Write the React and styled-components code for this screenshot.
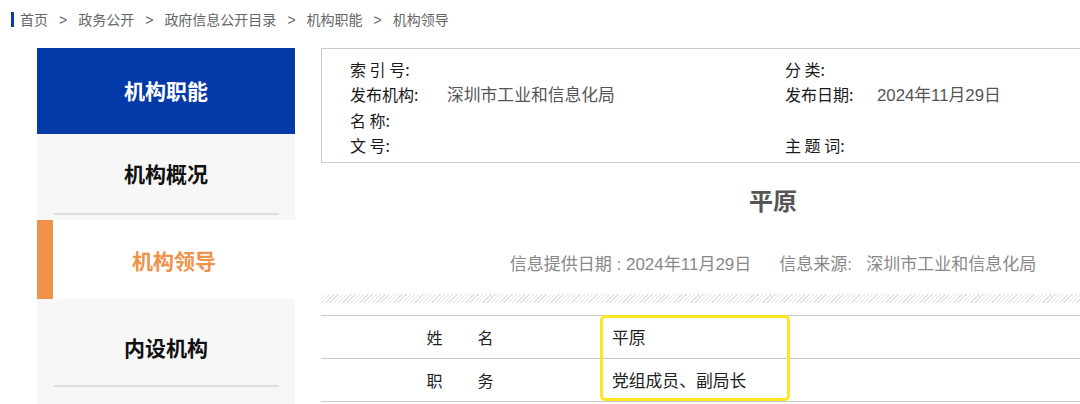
import styled, { createGlobalStyle } from "styled-components";

const GlobalStyle = createGlobalStyle`
  html, body {
    margin: 0;
    padding: 0;
    background: #fff;
    overflow: hidden;
  }
  body {
    font-family: "Liberation Sans", "Noto Sans CJK SC", sans-serif;
    color: #333;
  }
`;

const menu = [
  { id: "func", label: "机构职能", kind: "head" },
  { id: "summary", label: "机构概况", kind: "normal", top: 24, bottom: 25 },
  { id: "leader", label: "机构领导", kind: "active" },
  { id: "dept", label: "内设机构", kind: "normal", top: 33, bottom: 23 },
];

const crumbs = ["首页", "政务公开", "政府信息公开目录", "机构职能", "机构领导"];

const App = () => {
  return (
    <StyledPage>
      <GlobalStyle />
      <StyledBreadcrumb>
        <StyledCrumbMark />
        {crumbs.map((c, i) => (
          <span key={c}>
            {i > 0 && <StyledSep>&gt;</StyledSep>}
            {c}
          </span>
        ))}
      </StyledBreadcrumb>

      <StyledMain>
        <StyledSide>
          {menu.map((m) =>
            m.kind === "head" ? (
              <StyledHeadItem key={m.id}>{m.label}</StyledHeadItem>
            ) : m.kind === "active" ? (
              <StyledActiveItem key={m.id}>{m.label}</StyledActiveItem>
            ) : (
              <StyledMenuItem key={m.id} $top={m.top} $bottom={m.bottom}>
                <span>{m.label}</span>
                <StyledDivider />
              </StyledMenuItem>
            )
          )}
        </StyledSide>

        <StyledContent>
          <StyledMetaBox>
            <StyledMetaRow>
              <StyledMetaLabel $w={97}>索 引 号:</StyledMetaLabel>
            </StyledMetaRow>
            <StyledMetaRow>
              <StyledMetaLabel $w={92}>分 类:</StyledMetaLabel>
            </StyledMetaRow>
            <StyledMetaRow>
              <StyledMetaLabel $w={97}>发布机构:</StyledMetaLabel>
              <StyledMetaValue>深圳市工业和信息化局</StyledMetaValue>
            </StyledMetaRow>
            <StyledMetaRow>
              <StyledMetaLabel $w={92}>发布日期:</StyledMetaLabel>
              <StyledMetaValue>2024年11月29日</StyledMetaValue>
            </StyledMetaRow>
            <StyledMetaRow>
              <StyledMetaLabel $w={97}>名 称:</StyledMetaLabel>
            </StyledMetaRow>
            <StyledMetaRow />
            <StyledMetaRow>
              <StyledMetaLabel $w={97}>文 号:</StyledMetaLabel>
            </StyledMetaRow>
            <StyledMetaRow>
              <StyledMetaLabel $w={92}>主 题 词:</StyledMetaLabel>
            </StyledMetaRow>
          </StyledMetaBox>

          <StyledTitle>平原</StyledTitle>

          <StyledInfo>
            <span>信息提供日期 : 2024年11月29日</span>
            <span>信息来源:&nbsp;&nbsp;&nbsp;深圳市工业和信息化局</span>
          </StyledInfo>

          <StyledStripe />

          <StyledTableWrap>
            <StyledTable>
              <tbody>
                <tr>
                  <StyledLabelCell>姓　　名</StyledLabelCell>
                  <StyledValueCell>平原</StyledValueCell>
                  <StyledRestCell />
                </tr>
                <tr>
                  <StyledLabelCell>职　　务</StyledLabelCell>
                  <StyledValueCell>党组成员、副局长</StyledValueCell>
                  <StyledRestCell />
                </tr>
              </tbody>
            </StyledTable>
            <StyledHighlight />
          </StyledTableWrap>
        </StyledContent>
      </StyledMain>
    </StyledPage>
  );
};

export default App;

const StyledPage = styled.div`
  width: 1080px;
  height: 404px;
  overflow: hidden;
`;

const StyledBreadcrumb = styled.div`
  display: flex;
  align-items: center;
  height: 38px;
  padding-left: 11px;
  font-size: 14px;
  color: #666;
  box-sizing: border-box;
`;

const StyledCrumbMark = styled.i`
  display: inline-block;
  width: 3px;
  height: 15px;
  background: #0a3fa8;
  margin-right: 6px;
`;

const StyledSep = styled.span`
  margin: 0 11px;
  font-family: "Liberation Sans", sans-serif;
`;

const StyledMain = styled.div`
  display: flex;
  gap: 26px;
  padding: 10px 0 0 37px;
`;

const StyledSide = styled.nav`
  width: 258px;
  flex-shrink: 0;
  background: #f7f7f7;
  height: 356px;
  font-family: "Noto Sans CJK SC", sans-serif;
  font-size: 21px;
  font-weight: 700;
`;

const StyledHeadItem = styled.div`
  height: 86px;
  background: #043aa7;
  color: #fff;
  display: flex;
  align-items: center;
  justify-content: center;
  padding-bottom: 2px;
  box-sizing: border-box;
`;

const StyledMenuItem = styled.div`
  display: flex;
  flex-direction: column;
  align-items: center;
  color: #111;
  padding-top: ${(p) => p.$top}px;
  padding-bottom: 5px;
  line-height: 30px;

  & > span {
    margin-bottom: ${(p) => p.$bottom}px;
  }
`;

const StyledDivider = styled.div`
  width: 225px;
  height: 2px;
  background: #dedede;
`;

const StyledActiveItem = styled.div`
  height: 79px;
  background: #fff;
  color: #f0924a;
  border-left: 16px solid #f0924a;
  display: flex;
  align-items: center;
  justify-content: center;
  box-sizing: border-box;
`;

const StyledContent = styled.div`
  width: 904px;
  flex-shrink: 0;
`;

const StyledMetaBox = styled.div`
  border: 1px solid #ccc;
  padding: 7px 0 4px 28px;
  display: grid;
  grid-template-columns: 435px 1fr;
  font-size: 16px;
`;

const StyledMetaRow = styled.div`
  display: flex;
  align-items: center;
  height: 25.5px;
`;

const StyledMetaLabel = styled.span`
  width: ${(p) => p.$w}px;
  color: #1a1a1a;
  font-family: "Noto Sans CJK SC", sans-serif;
  flex-shrink: 0;
`;

const StyledMetaValue = styled.span`
  color: #555;
  font-size: 16.8px;
`;

const StyledTitle = styled.h1`
  margin: 23px 0 0;
  text-align: center;
  font-size: 24px;
  line-height: 32px;
  font-weight: 700;
  color: #555;
`;

const StyledInfo = styled.div`
  margin-top: 35px;
  display: flex;
  justify-content: center;
  gap: 28px;
  font-size: 17px;
  line-height: 24px;
  color: #888;
`;

const StyledStripe = styled.div`
  margin-top: 17px;
  height: 9px;
  background: repeating-linear-gradient(
    135deg,
    #e2e2e2 0 1px,
    #fff 1px 3px
  );
`;

const StyledTableWrap = styled.div`
  position: relative;
  margin-top: 12px;
`;

const StyledTable = styled.table`
  width: 100%;
  border-collapse: collapse;
  font-size: 16px;
  color: #222;

  td {
    height: 42px;
    padding: 0;
    border-top: 1px solid #c8c8c8;
    border-bottom: 1px solid #c8c8c8;
  }
`;

const StyledLabelCell = styled.td`
  width: 279px;
  text-align: center;
  font-family: "Noto Sans CJK SC", sans-serif;
  letter-spacing: 1px;
`;

const StyledValueCell = styled.td`
  width: 178px;
  padding-left: 12px !important;
  font-size: 16.8px;
  font-family: "Noto Sans CJK SC", sans-serif;
`;

const StyledRestCell = styled.td``;

const StyledHighlight = styled.div`
  position: absolute;
  left: 279px;
  top: 0;
  width: 190px;
  height: 86px;
  border: 3px solid #fce626;
  border-radius: 5px;
  box-sizing: border-box;
  pointer-events: none;
`;
